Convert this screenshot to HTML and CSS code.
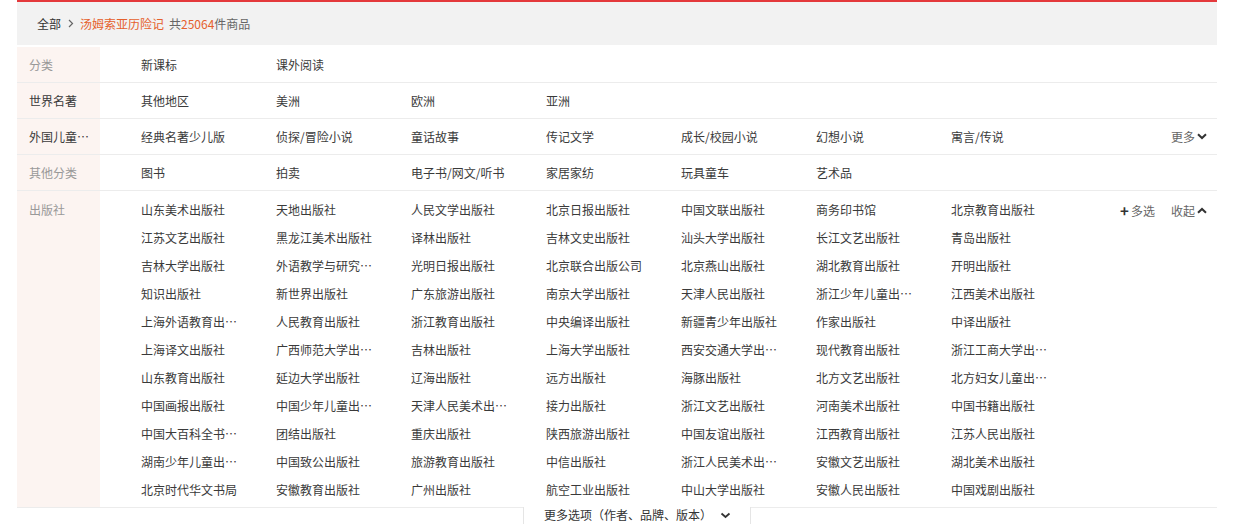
FILE: index.html
```html
<html>
<head>
    <meta charset="utf-8">
    <link rel="stylesheet" href="styles.css">
</head>
<body>
    <div id="filter">
        <div class="crumb">
            <span class="crumb-all">全部</span>
            <svg class="crumb-arrow" width="6" height="9" viewBox="0 0 6 9"><polyline points="1,1 4.5,4.5 1,8" fill="none" stroke="#666" stroke-width="1.2"/></svg>
            <span class="crumb-key">汤姆索亚历险记</span>
            <span class="crumb-count">共<em>25064</em>件商品</span>
        </div>

        <div class="row">
            <div class="label dim">分类</div>
            <div class="values">
                <a>新课标</a><a>课外阅读</a>
            </div>
        </div>
        <div class="row">
            <div class="label">世界名著</div>
            <div class="values">
                <a>其他地区</a><a>美洲</a><a>欧洲</a><a>亚洲</a>
            </div>
        </div>
        <div class="row">
            <div class="label">外国儿童…</div>
            <div class="values">
                <a>经典名著少儿版</a><a>侦探/冒险小说</a><a>童话故事</a><a>传记文学</a><a>成长/校园小说</a><a>幻想小说</a><a>寓言/传说</a>
            </div>
            <div class="actions">
                <span class="act">更多<svg width="10" height="7" viewBox="0 0 10 7"><polyline points="1,1.2 5,5 9,1.2" fill="none" stroke="#333" stroke-width="2"/></svg></span>
            </div>
        </div>
        <div class="row">
            <div class="label dim">其他分类</div>
            <div class="values">
                <a>图书</a><a>拍卖</a><a>电子书/网文/听书</a><a>家居家纺</a><a>玩具童车</a><a>艺术品</a>
            </div>
        </div>
        <div class="row row-multi">
            <div class="label dim">出版社</div>
            <div class="values">
                <a>山东美术出版社</a><a>天地出版社</a><a>人民文学出版社</a><a>北京日报出版社</a><a>中国文联出版社</a><a>商务印书馆</a><a>北京教育出版社</a>
                <a>江苏文艺出版社</a><a>黑龙江美术出版社</a><a>译林出版社</a><a>吉林文史出版社</a><a>汕头大学出版社</a><a>长江文艺出版社</a><a>青岛出版社</a>
                <a>吉林大学出版社</a><a>外语教学与研究…</a><a>光明日报出版社</a><a>北京联合出版公司</a><a>北京燕山出版社</a><a>湖北教育出版社</a><a>开明出版社</a>
                <a>知识出版社</a><a>新世界出版社</a><a>广东旅游出版社</a><a>南京大学出版社</a><a>天津人民出版社</a><a>浙江少年儿童出…</a><a>江西美术出版社</a>
                <a>上海外语教育出…</a><a>人民教育出版社</a><a>浙江教育出版社</a><a>中央编译出版社</a><a>新疆青少年出版社</a><a>作家出版社</a><a>中译出版社</a>
                <a>上海译文出版社</a><a>广西师范大学出…</a><a>吉林出版社</a><a>上海大学出版社</a><a>西安交通大学出…</a><a>现代教育出版社</a><a>浙江工商大学出…</a>
                <a>山东教育出版社</a><a>延边大学出版社</a><a>辽海出版社</a><a>远方出版社</a><a>海豚出版社</a><a>北方文艺出版社</a><a>北方妇女儿童出…</a>
                <a>中国画报出版社</a><a>中国少年儿童出…</a><a>天津人民美术出…</a><a>接力出版社</a><a>浙江文艺出版社</a><a>河南美术出版社</a><a>中国书籍出版社</a>
                <a>中国大百科全书…</a><a>团结出版社</a><a>重庆出版社</a><a>陕西旅游出版社</a><a>中国友谊出版社</a><a>江西教育出版社</a><a>江苏人民出版社</a>
                <a>湖南少年儿童出…</a><a>中国致公出版社</a><a>旅游教育出版社</a><a>中信出版社</a><a>浙江人民美术出…</a><a>安徽文艺出版社</a><a>湖北美术出版社</a>
                <a>北京时代华文书局</a><a>安徽教育出版社</a><a>广州出版社</a><a>航空工业出版社</a><a>中山大学出版社</a><a>安徽人民出版社</a><a>中国戏剧出版社</a>
            </div>
            <div class="actions">
                <span class="act"><b class="plus">+</b>多选</span>
                <span class="act">收起<svg width="10" height="7" viewBox="0 0 10 7"><polyline points="1,5.8 5,2 9,5.8" fill="none" stroke="#333" stroke-width="2"/></svg></span>
            </div>
        </div>

        <div class="more-tab">
            更多选项（作者、品牌、版本）
            <svg width="11" height="7" viewBox="0 0 11 7"><polyline points="1.5,1.5 5.5,5 9.5,1.5" fill="none" stroke="#333" stroke-width="1.8"/></svg>
        </div>
    </div>
</body>
</html>
```

FILE: styles.css
```css
html, body {
    margin: 0px;
    background: #fff;
    font-family: "Noto Sans CJK SC", "Microsoft YaHei", sans-serif;
    font-size: 12px;
    color: #3a3a3a;
}
#filter {
    width: 1200px;
    margin-left: 17px;
}
.crumb {
    border-top: 2px solid #e4393c;
    background: #f2f2f2;
    height: 43px;
    line-height: 43px;
    padding-left: 20px;
    margin-bottom: 2px;
    display: flex;
    align-items: center;
}
.crumb-all {
    color: #333;
}
.crumb-arrow {
    margin: 0 6px 0 7px;
}
.crumb-key {
    color: #e5602c;
}
.crumb-count {
    color: #666;
    margin-left: 5px;
}
.crumb-count em {
    font-style: normal;
    color: #e5602c;
}
.row {
    display: flex;
    border-bottom: 1px solid #ececec;
}
.label {
    width: 71px;
    flex-shrink: 0;
    padding-left: 12px;
    background: #fcf4f1;
    line-height: 35px;
    color: #3a3a3a;
    white-space: nowrap;
}
.label.dim {
    color: #999;
}
.values {
    flex: 1;
    display: flex;
    flex-wrap: wrap;
    padding-left: 41px;
    line-height: 35px;
}
.values a {
    width: 135px;
    color: #3a3a3a;
    white-space: nowrap;
    overflow: hidden;
}
.actions {
    width: 110px;
    display: flex;
    justify-content: flex-end;
    padding-right: 10px;
    line-height: 35px;
    flex-shrink: 0;
}
.act {
    color: #666;
    display: flex;
    align-items: center;
    height: 35px;
    margin-left: 16px;
}
.act svg {
    margin-left: 2px;
}
.plus {
    font-size: 15px;
    font-weight: bold;
    color: #333;
    margin-right: 2px;
}
.row-multi .label {
    padding-top: 5px;
    line-height: 28px;
}
.row-multi .values {
    padding-top: 5px;
    padding-bottom: 3px;
    line-height: 28px;
}
.row-multi .actions {
    padding-top: 2px;
}
.more-tab {
    width: 206px;
    margin: -1px 0 0 506px;
    height: 28px;
    background: #fff;
    border-left: 1px solid #e5e5e5;
    border-right: 1px solid #e5e5e5;
    padding-left: 20px;
    line-height: 14px;
    padding-top: 1px;
    color: #333;
    display: flex;
    align-items: flex-start;
    position: relative;
}
.more-tab svg {
    margin: 4px 0 0 8px;
}
```
